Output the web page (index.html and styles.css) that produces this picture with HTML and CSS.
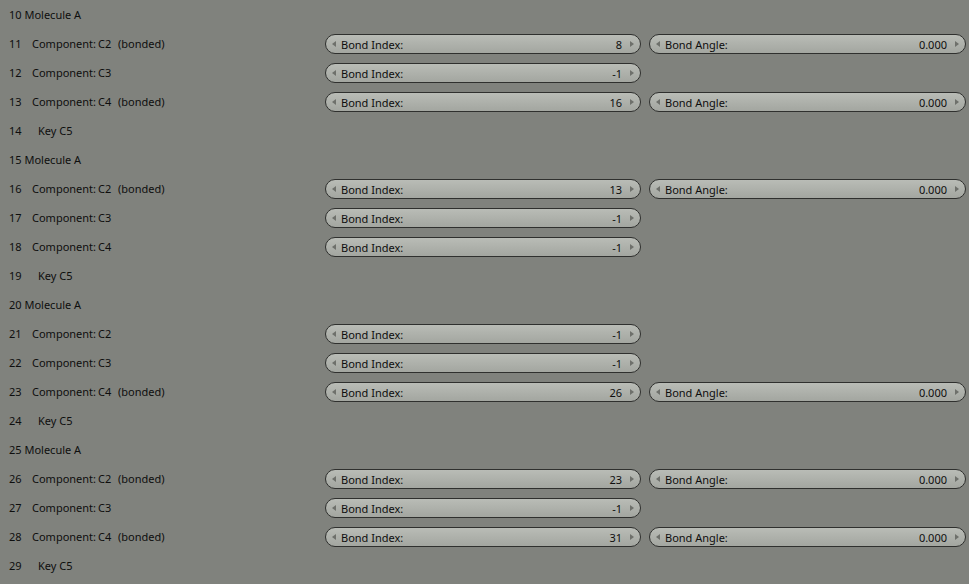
FILE: index.html
```html
<!DOCTYPE html>
<html>
<head>
<meta charset="utf-8">
<link rel="stylesheet" href="styles.css">
</head>
<body>
<div class="list">
  <div class="row"><span class="head">10 Molecule A</span></div>

  <div class="row">
    <div class="label"><span class="num">11</span><span class="kw">Component:</span><span class="cv">C2</span><span>(bonded)</span></div>
    <div class="field fi"><span class="arr l"></span><span class="name">Bond Index:</span><span class="val">8</span><span class="arr r"></span></div>
    <div class="field fa"><span class="arr l"></span><span class="name">Bond Angle:</span><span class="val">0.000</span><span class="arr r"></span></div>
  </div>
  <div class="row">
    <div class="label"><span class="num">12</span><span class="kw">Component:</span><span class="cv">C3</span></div>
    <div class="field fi"><span class="arr l"></span><span class="name">Bond Index:</span><span class="val">-1</span><span class="arr r"></span></div>
  </div>
  <div class="row">
    <div class="label"><span class="num">13</span><span class="kw">Component:</span><span class="cv">C4</span><span>(bonded)</span></div>
    <div class="field fi"><span class="arr l"></span><span class="name">Bond Index:</span><span class="val">16</span><span class="arr r"></span></div>
    <div class="field fa"><span class="arr l"></span><span class="name">Bond Angle:</span><span class="val">0.000</span><span class="arr r"></span></div>
  </div>
  <div class="row"><div class="label"><span class="num knum">14</span><span>Key C5</span></div></div>

  <div class="row"><span class="head">15 Molecule A</span></div>
  <div class="row">
    <div class="label"><span class="num">16</span><span class="kw">Component:</span><span class="cv">C2</span><span>(bonded)</span></div>
    <div class="field fi"><span class="arr l"></span><span class="name">Bond Index:</span><span class="val">13</span><span class="arr r"></span></div>
    <div class="field fa"><span class="arr l"></span><span class="name">Bond Angle:</span><span class="val">0.000</span><span class="arr r"></span></div>
  </div>
  <div class="row">
    <div class="label"><span class="num">17</span><span class="kw">Component:</span><span class="cv">C3</span></div>
    <div class="field fi"><span class="arr l"></span><span class="name">Bond Index:</span><span class="val">-1</span><span class="arr r"></span></div>
  </div>
  <div class="row">
    <div class="label"><span class="num">18</span><span class="kw">Component:</span><span class="cv">C4</span></div>
    <div class="field fi"><span class="arr l"></span><span class="name">Bond Index:</span><span class="val">-1</span><span class="arr r"></span></div>
  </div>
  <div class="row"><div class="label"><span class="num knum">19</span><span>Key C5</span></div></div>

  <div class="row"><span class="head">20 Molecule A</span></div>
  <div class="row">
    <div class="label"><span class="num">21</span><span class="kw">Component:</span><span class="cv">C2</span></div>
    <div class="field fi"><span class="arr l"></span><span class="name">Bond Index:</span><span class="val">-1</span><span class="arr r"></span></div>
  </div>
  <div class="row">
    <div class="label"><span class="num">22</span><span class="kw">Component:</span><span class="cv">C3</span></div>
    <div class="field fi"><span class="arr l"></span><span class="name">Bond Index:</span><span class="val">-1</span><span class="arr r"></span></div>
  </div>
  <div class="row">
    <div class="label"><span class="num">23</span><span class="kw">Component:</span><span class="cv">C4</span><span>(bonded)</span></div>
    <div class="field fi"><span class="arr l"></span><span class="name">Bond Index:</span><span class="val">26</span><span class="arr r"></span></div>
    <div class="field fa"><span class="arr l"></span><span class="name">Bond Angle:</span><span class="val">0.000</span><span class="arr r"></span></div>
  </div>
  <div class="row"><div class="label"><span class="num knum">24</span><span>Key C5</span></div></div>

  <div class="row"><span class="head">25 Molecule A</span></div>
  <div class="row">
    <div class="label"><span class="num">26</span><span class="kw">Component:</span><span class="cv">C2</span><span>(bonded)</span></div>
    <div class="field fi"><span class="arr l"></span><span class="name">Bond Index:</span><span class="val">23</span><span class="arr r"></span></div>
    <div class="field fa"><span class="arr l"></span><span class="name">Bond Angle:</span><span class="val">0.000</span><span class="arr r"></span></div>
  </div>
  <div class="row">
    <div class="label"><span class="num">27</span><span class="kw">Component:</span><span class="cv">C3</span></div>
    <div class="field fi"><span class="arr l"></span><span class="name">Bond Index:</span><span class="val">-1</span><span class="arr r"></span></div>
  </div>
  <div class="row">
    <div class="label"><span class="num">28</span><span class="kw">Component:</span><span class="cv">C4</span><span>(bonded)</span></div>
    <div class="field fi"><span class="arr l"></span><span class="name">Bond Index:</span><span class="val">31</span><span class="arr r"></span></div>
    <div class="field fa"><span class="arr l"></span><span class="name">Bond Angle:</span><span class="val">0.000</span><span class="arr r"></span></div>
  </div>
  <div class="row"><div class="label"><span class="num knum">29</span><span>Key C5</span></div></div>
</div>
</body>
</html>
```

FILE: styles.css
```css
html, body {
  margin: 0;
  padding: 0;
  background: #80827d;
  width: 969px;
  height: 584px;
  overflow: hidden;
}

.list {
  padding-top: 0;
  font-family: "Noto Sans", "DejaVu Sans", sans-serif;
  font-size: 11px;
  color: #0e0e0e;
}

.row {
  display: flex;
  align-items: center;
  height: 29px;
  white-space: nowrap;
}

.head {
  padding-left: 9px;
}

.label {
  width: 325px;
  flex: none;
  display: flex;
  align-items: center;
  padding-left: 9px;
  box-sizing: border-box;
}

.num {
  width: 23px;
  flex: none;
}

.num.knum {
  width: 29px;
}

.kw {
  width: 66px;
  flex: none;
}

.cv {
  width: 20px;
  flex: none;
}

.field {
  flex: none;
  box-sizing: border-box;
  height: 20px;
  margin-top: 1px;
  border: 1px solid #2f302e;
  border-radius: 10px;
  background: linear-gradient(#b9bcb6, #a3a6a0);
  display: flex;
  align-items: center;
  padding: 0 6px 0 6px;
  color: #0e0e0e;
}

.fi {
  width: 316px;
}

.fa {
  width: 317px;
  margin-left: 8px;
}

.name {
  flex: 1;
  padding-left: 5px;
}

.val {
  padding-right: 8px;
}

.arr {
  width: 0;
  height: 0;
  border-top: 3px solid transparent;
  border-bottom: 3px solid transparent;
  flex: none;
}

.arr.l {
  border-right: 4px solid #6e706b;
}

.arr.r {
  border-left: 4px solid #6e706b;
}
```
